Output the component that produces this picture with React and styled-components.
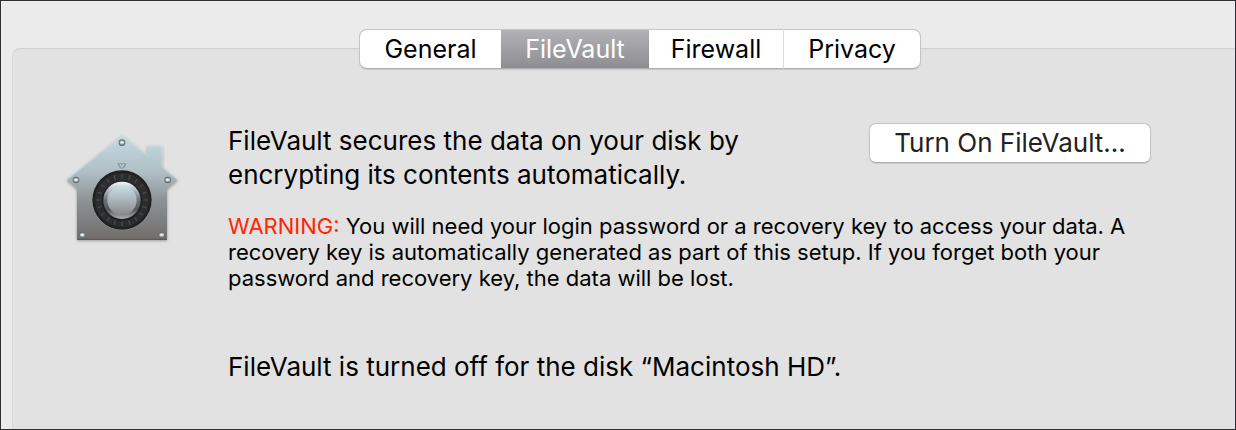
import React, { useState } from "react";
import styled, { createGlobalStyle } from "styled-components";

const GlobalStyle = createGlobalStyle`
  *, *::before, *::after { box-sizing: border-box; }
  body {
    margin: 0;
    background: #ebebeb;
    color: #000;
    font-family: Inter, "Liberation Sans", sans-serif;
  }
  p { margin: 0; }
`;

const Window = styled.main`
  display: flex;
  flex-direction: column;
  min-height: 100vh;
  padding: 47px 0 0 11px;
  border: 1px solid #303032;
  background: #ebebeb;
`;

const Pane = styled.section`
  flex: 1;
  border: solid #d0d0d0;
  border-width: 1px 0 0 1px;
  border-left-color: #dadada;
  border-top-left-radius: 8px;
  background: #e2e2e2;
`;

const TabBar = styled.div`
  display: grid;
  grid-template-columns: 142px 148px 134px 138px;
  justify-content: center;
  margin-top: -20px;
  padding-left: 32px;
`;

const Tab = styled.button`
  height: 40px;
  padding: 0;
  border: solid #c4c4c4;
  border-width: 1px 0;
  border-bottom-color: #adadad;
  background: ${(p) => (p["aria-selected"] ? "linear-gradient(#b2b1b6, #8e8d92)" : "#fff")};
  color: ${(p) => (p["aria-selected"] ? "#fff" : "#000")};
  box-shadow: 0 1px 1px rgba(0, 0, 0, 0.1);
  font-family: inherit;
  font-size: 25px;
  line-height: 38px;
  &:first-child {
    border-left-width: 1px;
    border-radius: 8px 0 0 8px;
  }
  &:last-child {
    border-left: 1px solid #dcdcdc;
    border-right-width: 1px;
    border-radius: 0 8px 8px 0;
  }
`;

const Content = styled.div`
  display: grid;
  grid-template-columns: 120px 1fr;
  column-gap: 46px;
  padding: 54px 84px 40px 49px;
`;

const VaultIcon = styled.svg`
  width: 120px;
  height: 120px;
  margin-top: 7px;
`;

const Intro = styled.div`
  display: flex;
  justify-content: space-between;
  align-items: flex-start;
`;

const Lead = styled.p`
  margin-top: 1px;
  font-size: 26px;
  line-height: 34px;
`;

const Warning = styled.p`
  margin-top: 21px;
  font-size: 22px;
  line-height: 26px;
  white-space: nowrap;
`;

const WarningLabel = styled.strong`
  color: #ff2600;
  font-weight: 400;
`;

const Status = styled.p`
  margin-top: 59px;
  font-size: 26px;
  line-height: 34px;
`;

const PushButton = styled.button`
  flex: none;
  width: 282px;
  height: 40px;
  padding: 0;
  border: 1px solid #c4c4c4;
  border-bottom-color: #adadad;
  border-radius: 7px;
  background: #fff;
  color: #222;
  box-shadow: 0 1px 1px rgba(0, 0, 0, 0.1);
  font-family: inherit;
  font-size: 26px;
  line-height: 38px;
`;

const TABS = ["General", "FileVault", "Firewall", "Privacy"];
const RIVETS = [[216, 68], [78, 180], [353, 180], [97, 345], [335, 345]];
const TICKS = Array.from({ length: 20 }, (_, i) => i * 18);

function VaultHouse() {
  return (
    <VaultIcon viewBox="36 30 360 360" role="img" aria-label="FileVault">
      <defs>
        <linearGradient id="steel" x1="0" y1="0" x2="0" y2="1">
          <stop offset="0" stopColor="#c4dbe2" />
          <stop offset="0.35" stopColor="#b0bfc6" />
          <stop offset="0.62" stopColor="#8d9396" />
          <stop offset="1" stopColor="#706d6b" />
        </linearGradient>
        <linearGradient id="ring" x1="0" y1="0" x2="0" y2="1">
          <stop offset="0" stopColor="#f4fafc" />
          <stop offset="0.5" stopColor="#687278" />
          <stop offset="0.75" stopColor="#53575a" />
          <stop offset="1" stopColor="#b1b1b1" />
        </linearGradient>
        <linearGradient id="knob" x1="0" y1="0" x2="0" y2="1">
          <stop offset="0" stopColor="#c7dfe7" />
          <stop offset="0.5" stopColor="#a9b4ba" />
          <stop offset="1" stopColor="#898888" />
        </linearGradient>
        <linearGradient id="rivet" x1="0" y1="0" x2="0" y2="1">
          <stop offset="0" stopColor="#8d969a" />
          <stop offset="0.5" stopColor="#dfe5e7" />
          <stop offset="1" stopColor="#7c8285" />
        </linearGradient>
        <filter id="drop" x="-10%" y="-10%" width="120%" height="125%">
          <feDropShadow dx="0" dy="3" stdDeviation="4" floodOpacity="0.35" />
        </filter>
      </defs>
      <path
        filter="url(#drop)"
        fill="url(#steel)"
        d="M216 46L291 105V78H337V142L383 180L351 207V359H81V207L50 180Z"
      />
      <path d="M51 180L216 48L291 106V79H336V142L382 180" fill="none" stroke="#d9e9ee" strokeWidth="2" opacity="0.5" />
      <path d="M81 358H351" stroke="#565452" strokeWidth="3" />
      <path d="M204 131H228L221 144H211Z" fill="#9ba9af" stroke="#77858a" strokeWidth="2" />
      <path d="M210 132L216 142L222 132" fill="none" stroke="#dce6ea" strokeWidth="2" />
      <circle cx="216" cy="242" r="89" fill="#aab3b6" opacity="0.6" />
      <circle cx="216" cy="240" r="89" fill="#202121" />
      <circle cx="216" cy="240" r="81" fill="#2c2d2e" />
      {TICKS.map((angle) => (
        <path key={angle} d="M216 162V176" stroke="#505354" strokeWidth="3" transform={`rotate(${angle} 216 240)`} />
      ))}
      <circle cx="216" cy="243" r="61" fill="#191a1a" opacity="0.6" />
      <circle cx="216" cy="241" r="56" fill="url(#ring)" />
      <circle cx="216" cy="241" r="44" fill="url(#knob)" />
      {RIVETS.map(([x, y]) => (
        <g key={`${x}-${y}`}>
          <circle cx={x} cy={y} r="10" fill="#667074" />
          <circle cx={x} cy={y} r="7" fill="url(#rivet)" />
          <circle cx={x} cy={y - 1} r="3" fill="#f4f7f8" />
        </g>
      ))}
    </VaultIcon>
  );
}

export default function App() {
  const [active, setActive] = useState("FileVault");
  return (
    <>
      <GlobalStyle />
      <Window>
        <Pane>
          <TabBar role="tablist">
            {TABS.map((name) => (
              <Tab key={name} role="tab" type="button" aria-selected={name === active} onClick={() => setActive(name)}>
                {name}
              </Tab>
            ))}
          </TabBar>
          <Content>
            <VaultHouse />
            <div>
              <Intro>
                <Lead>
                  FileVault secures the data on your disk by
                  <br />
                  encrypting its contents automatically.
                </Lead>
                <PushButton type="button">Turn On FileVault…</PushButton>
              </Intro>
              <Warning>
                <WarningLabel>WARNING:</WarningLabel> You will need your login password or a recovery key to access your data. A
                <br />
                recovery key is automatically generated as part of this setup. If you forget both your
                <br />
                password and recovery key, the data will be lost.
              </Warning>
              <Status>FileVault is turned off for the disk “Macintosh HD”.</Status>
            </div>
          </Content>
        </Pane>
      </Window>
    </>
  );
}
